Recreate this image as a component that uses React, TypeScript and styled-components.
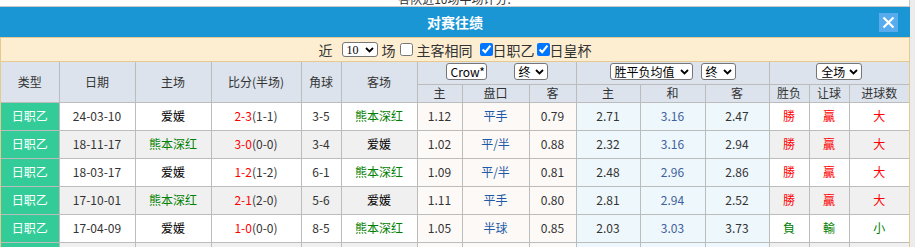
import React from 'react';
import styled, { createGlobalStyle } from 'styled-components';

const GlobalStyle = createGlobalStyle`
  html, body {
    margin: 0;
    padding: 0;
  }
  body {
    background: #ececec;
    font-family: "Noto Sans CJK SC", "Noto Sans", sans-serif;
    color: #333;
  }
`;

const Page = styled.div`
  width: 910px;
  background: #fff;
`;

const TopNote = styled.div`
  height: 6px;
  overflow: hidden;
  display: flex;
  align-items: flex-end;
  justify-content: center;
  background: #fff;
  border-bottom: 1px solid #c8c8c8;
  border-right: 1px solid #c8c8c8;
  font-size: 12px;
  line-height: 14px;
  color: #333;
`;

const TitleBar = styled.div`
  height: 30px;
  background: #1b96d4;
  display: grid;
  grid-template-columns: 1fr auto 1fr;
  align-items: center;
`;

const Title = styled.div`
  grid-column: 2;
  color: #fff;
  font-size: 14px;
  font-weight: bold;
`;

const CloseButton = styled.button`
  grid-column: 3;
  justify-self: end;
  margin-right: 12px;
  width: 19px;
  height: 19px;
  padding: 0;
  border: none;
  background: #58acee;
  display: flex;
  align-items: center;
  justify-content: center;
  cursor: pointer;
`;

const FilterBar = styled.div`
  height: 23px;
  background: #fdeed2;
  border: 1px solid #e5c990;
  display: flex;
  align-items: center;
  justify-content: center;
  font-size: 14px;
  color: #333;
`;

const Word = styled.span<{ $ml?: number; $mr?: number }>`
  margin-left: ${(p) => p.$ml ?? 0}px;
  margin-right: ${(p) => p.$mr ?? 0}px;
  line-height: 1;
`;

const Check = styled.input<{ $ml?: number; $mr?: number }>`
  width: 13px;
  height: 13px;
  margin: 0 ${(p) => p.$mr ?? 0}px 0 ${(p) => p.$ml ?? 0}px;
`;

const Select = styled.span<{ $w: number; $h: number; $serif?: boolean }>`
  display: inline-flex;
  align-items: center;
  justify-content: space-between;
  box-sizing: border-box;
  width: ${(p) => p.$w}px;
  height: ${(p) => p.$h}px;
  padding: 0 3px 0 4px;
  border: 1px solid #767676;
  border-radius: 3px;
  background: #fff;
  color: #000;
  font-size: 12px;
  line-height: 1;
  font-family: ${(p) => (p.$serif ? '"Liberation Serif", serif' : 'inherit')};
`;

const SelectGroup = styled.div<{ $gap: number }>`
  display: flex;
  justify-content: center;
  align-items: center;
  gap: ${(p) => p.$gap}px;
  margin-top: -2px;
`;

const Board = styled.div`
  border-left: 1px solid #e5c990;
  border-right: 1px solid #e5c990;
`;

const Table = styled.table`
  width: 100%;
  border-collapse: collapse;
  border-style: hidden;
  table-layout: fixed;
  font-size: 12px;
`;

const Col = styled.col<{ $w: number }>`
  width: ${(p) => p.$w}px;
`;

const HeadRow = styled.tr<{ $h: number }>`
  height: ${(p) => p.$h}px;
`;

const Th = styled.th`
  background: #dce3ed;
  border: 1px solid #bcbcbc;
  font-weight: normal;
  color: #333;
  padding: 0;
  text-align: center;
  line-height: 1;
`;

const DataRow = styled.tr<{ $alt: boolean }>`
  height: 28px;
  background: ${(p) => (p.$alt ? '#f0f0f0' : '#fff')};
`;

const Td = styled.td<{ $tone?: 'odds' | 'avg'; $color?: string }>`
  border: 1px solid #bcbcbc;
  padding: 0;
  text-align: center;
  line-height: 1;
  color: ${(p) => p.$color ?? '#333'};
  background: ${(p) =>
    p.$tone === 'odds' ? '#fdf9f6' : p.$tone === 'avg' ? '#eef7fb' : 'transparent'};
`;

const TypeCell = styled.td`
  border: 1px solid #bcbcbc;
  border-left: 1px solid #bcbcbc;
  padding: 0;
  text-align: center;
  line-height: 1;
  background: #33cc99;
  color: #fff;
  font-size: 12px;
`;

const Red = styled.span`
  color: #ff0000;
`;

type Match = {
  date: string;
  home: string;
  away: string;
  ft: string;
  ht: string;
  corner: string;
  crow: [string, string, string];
  avg: [string, string, string];
  res: [string, string, string];
  good: boolean;
};

const matches: Match[] = [
  { date: '24-03-10', home: '爱媛', away: '熊本深红', ft: '2-3', ht: '(1-1)', corner: '3-5', crow: ['1.12', '平手', '0.79'], avg: ['2.71', '3.16', '2.47'], res: ['勝', '贏', '大'], good: true },
  { date: '18-11-17', home: '熊本深红', away: '爱媛', ft: '3-0', ht: '(0-0)', corner: '3-4', crow: ['1.02', '平/半', '0.88'], avg: ['2.32', '3.16', '2.94'], res: ['勝', '贏', '大'], good: true },
  { date: '18-03-17', home: '爱媛', away: '熊本深红', ft: '1-2', ht: '(1-2)', corner: '6-1', crow: ['1.09', '平/半', '0.81'], avg: ['2.48', '2.96', '2.86'], res: ['勝', '贏', '大'], good: true },
  { date: '17-10-01', home: '熊本深红', away: '爱媛', ft: '2-1', ht: '(2-0)', corner: '5-6', crow: ['1.11', '平手', '0.80'], avg: ['2.81', '2.94', '2.52'], res: ['勝', '贏', '大'], good: true },
  { date: '17-04-09', home: '爱媛', away: '熊本深红', ft: '1-0', ht: '(0-0)', corner: '8-5', crow: ['1.05', '半球', '0.85'], avg: ['2.03', '3.03', '3.73'], res: ['負', '輸', '小'], good: false },
];

const teamColor = (name: string) => (name === '熊本深红' ? '#008000' : '#000');

const widths = [58, 76, 76, 90, 40, 76, 45, 67, 47, 64, 65, 64, 40, 40, 60];

const Chevron = () => (
  <svg width="9" height="6" viewBox="0 0 9 6">
    <path d="M1 1l3.5 3.5L8 1" fill="none" stroke="#000" strokeWidth="1.8" />
  </svg>
);

const CloseIcon = () => (
  <svg width="13" height="13" viewBox="0 0 13 13">
    <path d="M1.5 1.5l10 10M11.5 1.5l-10 10" stroke="#fff" strokeWidth="2.2" />
  </svg>
);

const App: React.FC = () => (
  <Page>
    <GlobalStyle />
    <TopNote>各队近10场半场评分:</TopNote>
    <TitleBar>
      <Title>对赛往绩</Title>
      <CloseButton aria-label="close">
        <CloseIcon />
      </CloseButton>
    </TitleBar>
    <FilterBar>
      <Word $mr={9}>近</Word>
      <Select $w={36} $h={15} $serif>
        10
        <Chevron />
      </Select>
      <Word $ml={4}>场</Word>
      <Check type="checkbox" $ml={4} $mr={4} />
      <Word>主客相同</Word>
      <Check type="checkbox" defaultChecked $ml={7} />
      <Word>日职乙</Word>
      <Check type="checkbox" defaultChecked $ml={2} />
      <Word>日皇杯</Word>
    </FilterBar>
    <Board>
      <Table>
        <colgroup>
          {widths.map((w, i) => (
            <Col key={i} $w={w} />
          ))}
        </colgroup>
        <thead>
          <HeadRow $h={22}>
            <Th rowSpan={2}>类型</Th>
            <Th rowSpan={2}>日期</Th>
            <Th rowSpan={2}>主场</Th>
            <Th rowSpan={2}>比分(半场)</Th>
            <Th rowSpan={2}>角球</Th>
            <Th rowSpan={2}>客场</Th>
            <Th colSpan={3}>
              <SelectGroup $gap={27}>
                <Select $w={41} $h={17}>
                  Crow*
                  <Chevron />
                </Select>
                <Select $w={34} $h={17}>
                  终
                  <Chevron />
                </Select>
              </SelectGroup>
            </Th>
            <Th colSpan={3}>
              <SelectGroup $gap={8}>
                <Select $w={83} $h={17}>
                  胜平负均值
                  <Chevron />
                </Select>
                <Select $w={35} $h={17}>
                  终
                  <Chevron />
                </Select>
              </SelectGroup>
            </Th>
            <Th colSpan={3}>
              <SelectGroup $gap={0}>
                <Select $w={46} $h={17}>
                  全场
                  <Chevron />
                </Select>
              </SelectGroup>
            </Th>
          </HeadRow>
          <HeadRow $h={18}>
            <Th>主</Th>
            <Th>盘口</Th>
            <Th>客</Th>
            <Th>主</Th>
            <Th>和</Th>
            <Th>客</Th>
            <Th>胜负</Th>
            <Th>让球</Th>
            <Th>进球数</Th>
          </HeadRow>
        </thead>
        <tbody>
          {matches.map((m, i) => {
            const resColor = m.good ? '#ff0000' : '#008000';
            return (
              <DataRow key={m.date} $alt={i % 2 === 1}>
                <TypeCell>日职乙</TypeCell>
                <Td>{m.date}</Td>
                <Td $color={teamColor(m.home)}>{m.home}</Td>
                <Td>
                  <Red>{m.ft}</Red>
                  {m.ht}
                </Td>
                <Td>{m.corner}</Td>
                <Td $color={teamColor(m.away)}>{m.away}</Td>
                <Td $tone="odds">{m.crow[0]}</Td>
                <Td $tone="odds" $color="#1f5aa6">
                  {m.crow[1]}
                </Td>
                <Td $tone="odds">{m.crow[2]}</Td>
                <Td $tone="avg">{m.avg[0]}</Td>
                <Td $tone="avg" $color="#41609e">
                  {m.avg[1]}
                </Td>
                <Td $tone="avg">{m.avg[2]}</Td>
                <Td $color={resColor}>{m.res[0]}</Td>
                <Td $color={resColor}>{m.res[1]}</Td>
                <Td $color={resColor}>{m.res[2]}</Td>
              </DataRow>
            );
          })}
          <DataRow $alt>
            <TypeCell />
            {widths.slice(1).map((_, j) => (
              <Td key={j} $tone={j >= 5 && j < 8 ? 'odds' : j >= 8 && j < 11 ? 'avg' : undefined} />
            ))}
          </DataRow>
        </tbody>
      </Table>
    </Board>
  </Page>
);

export default App;
